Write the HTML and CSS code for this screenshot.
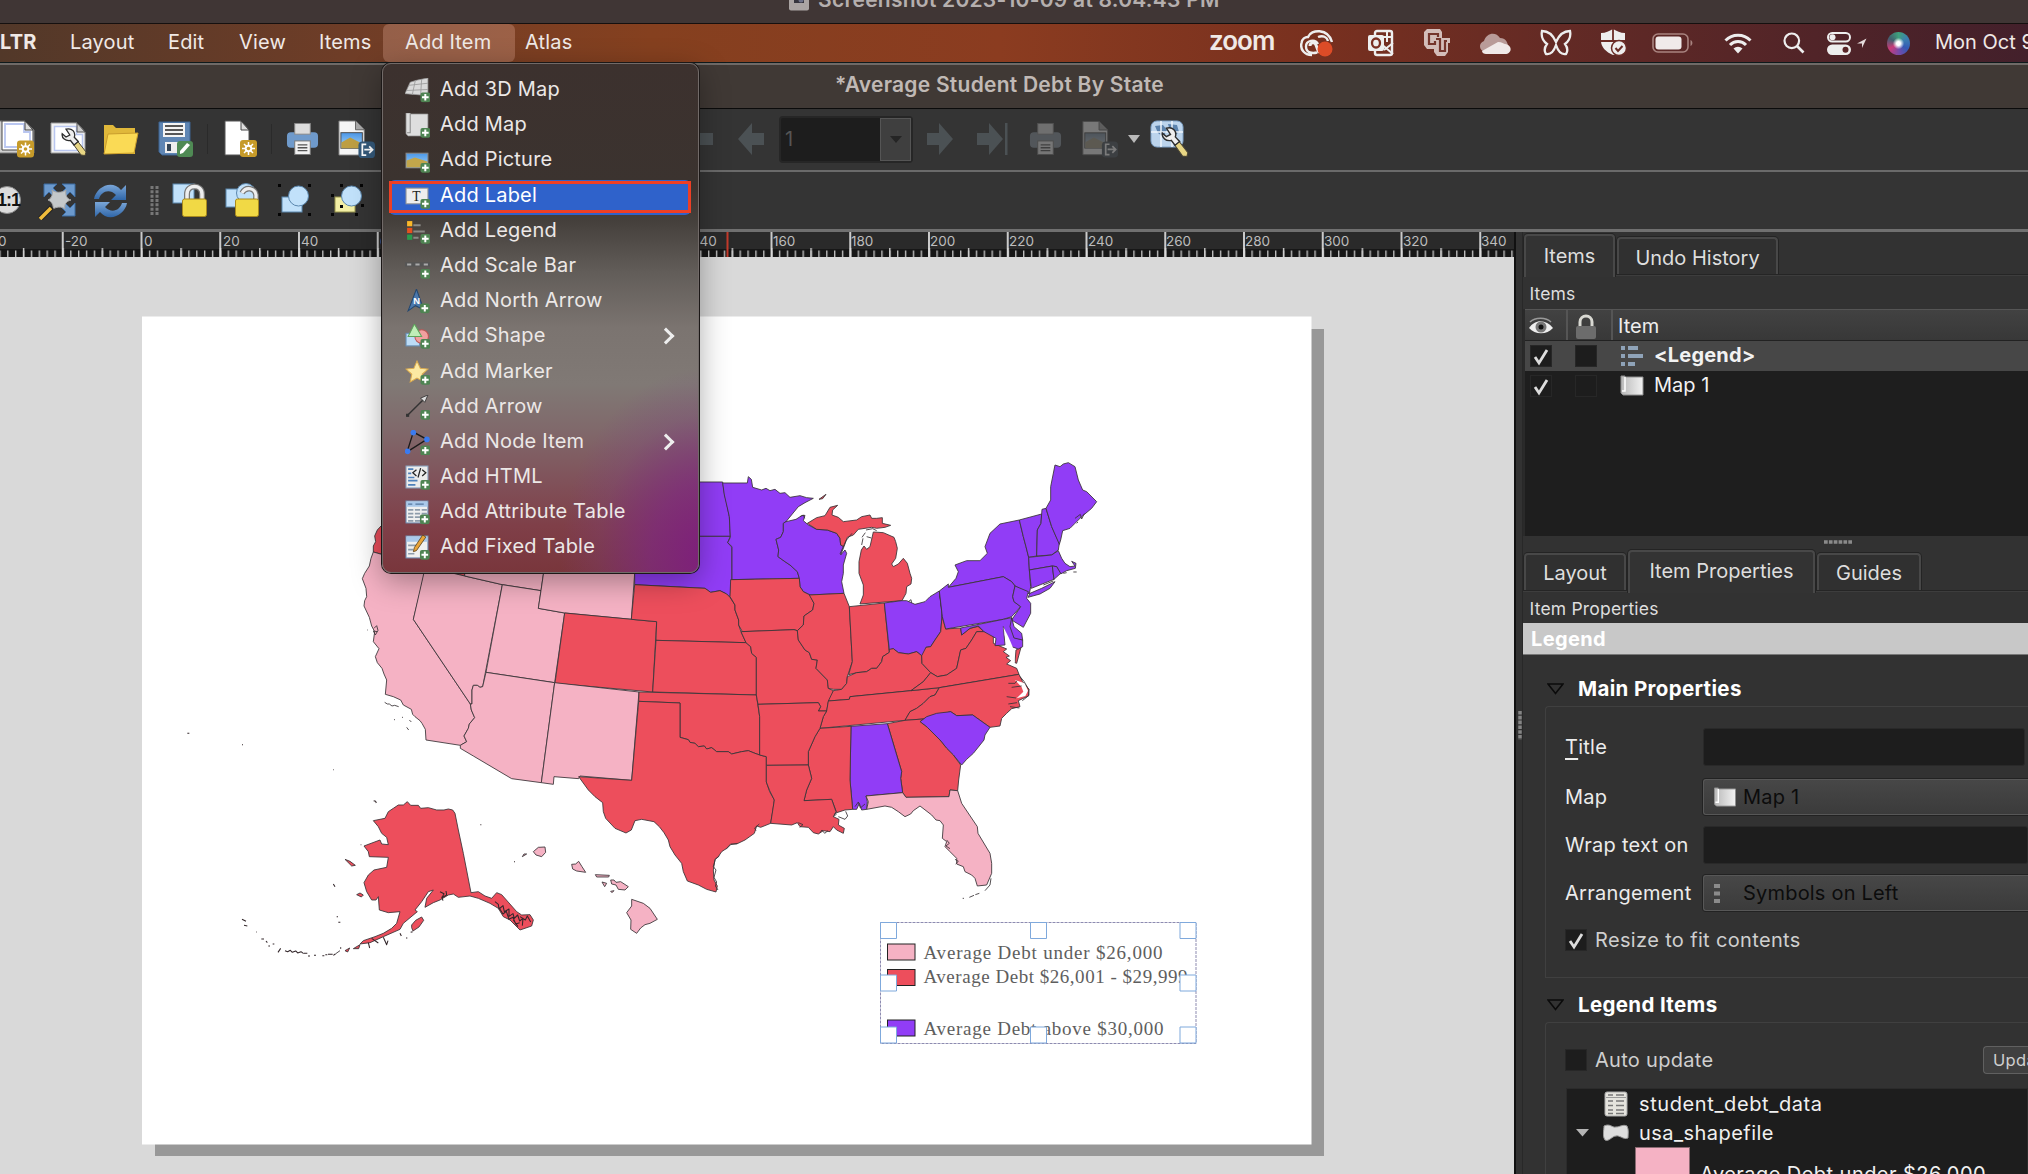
FILE: index.html
```html
<!DOCTYPE html>
<html lang="en">
<head>
<meta charset="utf-8">
<title>Average Student Debt By State</title>
<link rel="stylesheet" href="styles.css">
</head>
<body>
<svg width="0" height="0" class="defs">
  <defs>
    <linearGradient id="paper" x1="0" x2="1"><stop offset="0" stop-color="#b9b9b9"/><stop offset="1" stop-color="#f2f2f2"/></linearGradient>
    <linearGradient id="sky" x1="0" y1="0" x2="0" y2="1"><stop offset="0" stop-color="#4a97e8"/><stop offset="1" stop-color="#a9d6f7"/></linearGradient>
    <linearGradient id="blue" x1="0" y1="0" x2="0" y2="1"><stop offset="0" stop-color="#7aa6d8"/><stop offset="1" stop-color="#2f66a8"/></linearGradient>
    <symbol id="plus" viewBox="0 0 10 10"><rect x=".3" y=".3" width="9.4" height="9.4" rx="2" fill="#4e8452"/><path d="M5 1.8v6.4M1.8 5h6.4" stroke="#fff" stroke-width="1.9"/></symbol>
    <symbol id="star" viewBox="0 0 18 18"><rect x=".5" y=".5" width="17" height="17" rx="3" fill="#c69b2a"/><path d="M9 2.500v13M2.500 9h13M4.500 4.500l9 9M13.500 4.500l-9 9" stroke="#fff" stroke-width="1.500"/><circle cx="9" cy="9" r="3.800" fill="#fff"/><circle cx="9" cy="9" r="1.800" fill="#c69b2a"/></symbol>
    <symbol id="wrench" viewBox="0 0 26 28"><path d="M12.500 16.500l4-3.500 8.500 11-1 3.500-4-.5z" fill="#e8d684" stroke="#4b4636" stroke-width="1"/><path d="M5 1.200C11-.5 15 4 13.300 9.300l4 4.200-4.300 3.500-3.500-4.500C4.500 13.500.5 10 1.200 5.800L5 9l3.800-2z" fill="#eee" stroke="#2d2d2d" stroke-width="1.300"/></symbol>
    <symbol id="printer" viewBox="0 0 34 34"><rect x="1" y="10" width="32" height="16" rx="4" fill="#6f9acb"/><rect x="9" y="1" width="16" height="11" fill="#dcdcdc" stroke="#888"/><rect x="9" y="19" width="16" height="14" fill="#f2f2f2" stroke="#777"/><path d="M12 23h10M12 26h10M12 29h10" stroke="#555" stroke-width="1.4"/></symbol>
    <symbol id="export" viewBox="0 0 40 40"><path d="M2 1h17l9 9v26H2z" fill="#f6f6f6" stroke="#777"/><path d="M19 1v9h9" fill="#aaa" stroke="#666"/><rect x="4" y="13" width="22" height="16" fill="url(#sky)" stroke="#4d4d4d"/><path d="M4.500 23l9-5 12 6v5h-21z" fill="#bd9e42"/><rect x="22" y="22" width="17" height="17" rx="4" fill="#34597a"/><path d="M30 25h-4v11h4M28 30.500h8M33 27l3.500 3.500L33 34" fill="none" stroke="#fff" stroke-width="1.8"/></symbol>
    <symbol id="map" viewBox="0 0 24 22"><path d="M1 1h4v1h18v18H3L1 18z" fill="url(#paper)" stroke="#8f8f8f"/><path d="M5 2v14H2" fill="none" stroke="#fff" stroke-width="1.500"/></symbol>
    <symbol id="arrow" viewBox="0 0 26 32"><path d="M0 10h12V0l14 16-14 16V22H0z" fill="#4b5154"/></symbol>
    <symbol id="check" viewBox="0 0 22 22"><path d="M5 12l4 6 8-13" fill="none" stroke="#ddd" stroke-width="2.800"/></symbol>
  </defs>
</svg>

<header class="preview-title">
  <svg width="20" height="14" viewBox="0 0 20 14"><rect width="20" height="13.500" rx="2" fill="#aaa4a3"/><rect x="5" y="0" width="10" height="6" fill="#35343d"/><circle cx="12" cy="3" r="2.500" fill="#6d7088"/></svg>
  <span>Screenshot 2023-10-09 at 8.04.43 PM</span>
</header>

<nav class="menubar">
  <div class="menus">
    <b class="m-app">LTR</b><span class="m-layout">Layout</span><span class="m-edit">Edit</span><span class="m-view">View</span><span class="m-items">Items</span><span class="m-add">Add Item</span><span class="m-atlas">Atlas</span>
  </div>
  <div class="tray">
    <span class="zoom-word">zoom</span>
    <svg class="t-cc" width="34" height="28" viewBox="0 0 34 28"><path d="M12 26C4 26 0 20 1.500 14 2 10 5 8 8 8c3-8 20-9 24 5M17 23.500c-4 1-11 1-11-6 0-6 9-8 12-2.500M18 8c5-2 9 0 10 4" fill="none" stroke="#eee" stroke-width="2.400"/><path d="M10 17c0-4 5-4 6-1l3 8" fill="none" stroke="#eee" stroke-width="3"/><circle cx="25" cy="20" r="7.500" fill="#dd4c27"/></svg>
    <svg class="t-ol" width="28" height="28" viewBox="0 0 28 28"><rect x="8" y="2" width="17" height="24" rx="2" fill="none" stroke="#eee" stroke-width="2.400"/><path d="M9 8h15M20 3v10M13 14l13 11M26 14l-9 7" stroke="#eee" stroke-width="2"/><rect x="1" y="6" width="16" height="16" rx="2" fill="#eee"/><ellipse cx="9" cy="14" rx="4" ry="4.500" fill="none" stroke="#7a2f22" stroke-width="2.300"/></svg>
    <svg class="t-cu" width="28" height="28" viewBox="0 0 28 28"><path d="M1 3l3-3h13l2 3v6h8v5h-2v9l-3 4h-8l-3-4v-3H4l-3-4z" fill="#d3bdb9"/><path d="M15 8V5H6v10h6v-3M13 10h4v12h5V12h2" fill="none" stroke="#74352c" stroke-width="2.200"/></svg>
    <svg class="t-cloud" width="34" height="22" viewBox="0 0 34 22"><path d="M7 20C1 19 0 11 6 9 8 1 18-1 22 6c6 0 7 4 8 7z" fill="#b99b98"/><path d="M4 19l16-9c4 0 6 2 7 2 8 1 7 10 0 10H8c-2 0-4-1-4-3z" fill="#f0e9e8"/></svg>
    <svg class="t-fly" width="32" height="28" viewBox="0 0 32 28"><path d="M2 2c6 0 11 4 14 11C19 6 24 2 30 2c1 5-1 10-5 13 3 4 3 7 1 10-5 1-8-3-10-9-2 6-5 10-10 9-2-3-2-6 1-10C3 12 1 7 2 2z" fill="none" stroke="#eee" stroke-width="2.300"/></svg>
    <svg class="t-shield" width="28" height="28" viewBox="0 0 28 28"><path d="M1 4c5 0 8-2 12-4 4 2 7 4 12 4v8c0 8-6 12-12 14C6 23 1 18 1 12z" fill="#eee"/><path d="M13 0v13M1 12h24" stroke="#6a2c26" stroke-width="1.800"/><circle cx="19" cy="19" r="7.500" fill="#eee" stroke="#6a2c26" stroke-width="1.500"/><path d="M15.500 19l2.500 3 4.500-5" fill="none" stroke="#6a2c26" stroke-width="2"/></svg>
    <svg class="t-bat" width="42" height="20" viewBox="0 0 42 20"><rect x="1" y="1" width="35" height="18" rx="5" fill="none" stroke="#a98480" stroke-width="1.600"/><rect x="3.500" y="3.500" width="26" height="13" rx="3" fill="#f0eaea"/><path d="M38.500 7v6c2.500-1 2.500-5 0-6z" fill="#a98480"/></svg>
    <svg class="t-wifi" width="28" height="21" viewBox="0 0 28 21"><path d="M1.500 7.500a17.500 17.500 0 0 1 25 0M6 12a11 11 0 0 1 16 0" fill="none" stroke="#eee" stroke-width="3"/><path d="M9.500 15.500a6.500 6.500 0 0 1 9 0L14 20.500z" fill="#eee"/></svg>
    <svg class="t-find" width="22" height="22" viewBox="0 0 22 22"><circle cx="8.800" cy="8.800" r="7.300" fill="none" stroke="#eee" stroke-width="2.200"/><path d="M14 14l6.500 6.500" stroke="#eee" stroke-width="2.600"/></svg>
    <svg class="t-cc2" width="24" height="23" viewBox="0 0 24 23"><rect x="1" y="1" width="22" height="8.500" rx="4.200" fill="none" stroke="#eee" stroke-width="2"/><circle cx="5.500" cy="5.200" r="3" fill="#eee"/><rect y="12.500" width="24" height="10.500" rx="5.200" fill="#eee"/><circle cx="18.500" cy="17.700" r="3" fill="#5a2527"/></svg>
    <svg class="t-loc" width="10" height="10" viewBox="0 0 10 10"><path d="M0 5.500L9.500.5 5 10V5.500z" fill="#e5dcdc"/></svg>
    <span class="siri"></span>
    <span class="clock">Mon Oct 9</span>
  </div>
</nav>

<div class="window-title">*Average Student Debt By State</div>

<div class="toolbar">
  <svg class="i-new" width="35" height="38" viewBox="0 0 35 38"><path d="M-6 1h31l9 9v23H-6z" fill="#cfcfcf" stroke="#777"/><path d="M2 1h23l8 9v20H2z" fill="#fff" stroke="#444"/><path d="M5 4h19v8h6v15H5z" fill="none" stroke="#b9c6f0" stroke-width="1.800"/><path d="M25 1v9h8z" fill="#ddd" stroke="#444"/><use href="#star" x="16.500" y="20" width="18" height="18"/></svg>
  <svg class="i-man" width="37" height="36" viewBox="0 0 37 36"><path d="M1 2h26l8 9v21H1z" fill="#f2f2f2" stroke="#999"/><path d="M4.500 5.500h22v8h6v16h-28z" fill="#fff" stroke="#b9c6f0" stroke-width="1.500"/><path d="M27 2v9h8z" fill="#ccc" stroke="#555"/><use href="#wrench" x="11" y="7" width="26" height="28"/></svg>
  <svg class="i-open" width="36" height="31" viewBox="0 0 36 31"><path d="M1 30V1h9l3 3h19v26z" fill="#e0b83a"/><path d="M1 30L5 10l30-1-4 20z" fill="#fada55" stroke="#c99d2c"/></svg>
  <svg class="i-save" width="36" height="37" viewBox="0 0 36 37"><path d="M1 1h31v33H4l-3-3z" fill="#5f86b4" stroke="#3c6290"/><rect x="5" y="2" width="22" height="14" fill="#f4f4f4"/><path d="M7 5h18M7 9h18M7 13h18" stroke="#222" stroke-width="1.600"/><rect x="7" y="21" width="17" height="11" fill="#eee"/><rect x="9" y="23" width="4" height="7" fill="#345"/><rect x="19" y="20" width="16" height="16" rx="3" fill="#4f8a54"/><path d="M22 33v-3l7-8 3 2-7 8z" fill="#fff"/></svg>
  <i class="sep s1"></i>
  <svg class="i-page" width="34" height="38" viewBox="0 0 34 38"><path d="M1 1h16l8 9v25H1z" fill="#fff" stroke="#555"/><path d="M17 1v9h8z" fill="#ddd" stroke="#444"/><use href="#star" x="15.500" y="19.500" width="18" height="18"/></svg>
  <i class="sep s2"></i>
  <svg class="i-print" width="33" height="34"><use href="#printer" width="33" height="34"/></svg>
  <svg class="i-exp" width="39" height="39"><use href="#export" width="39" height="39"/></svg>
  <svg class="i-first" width="32" height="32" viewBox="0 0 32 32"><path d="M0 0h3v32H0z" fill="#4b5154"/><path d="M32 10H19V0L5 16l14 16V22h13z" fill="#4b5154"/></svg>
  <svg class="i-prev" width="26" height="32"><g transform="translate(26 0) scale(-1 1)"><use href="#arrow" width="26" height="32"/></g></svg>
  <div class="spin"><span>1</span><i></i></div>
  <svg class="i-next" width="26" height="32"><use href="#arrow" width="26" height="32"/></svg>
  <svg class="i-last" width="31" height="32" viewBox="0 0 31 32"><path d="M28 0h2.500v32H28z" fill="#4b5154"/><path d="M0 10h12V0l14 16-14 16V22H0z" fill="#4b5154"/></svg>
  <svg class="i-print2 dim" width="33" height="34"><use href="#printer" width="33" height="34"/></svg>
  <svg class="i-exp2 dim" width="38" height="39"><use href="#export" width="38" height="39"/></svg>
  <i class="caret"></i>
  <svg class="i-atlas" width="40" height="38" viewBox="0 0 40 38"><rect x="1" y="1" width="32" height="26" rx="6" fill="#bcd4ec" stroke="#7ea2c8"/><path d="M5 6l8-1 4 5-4 7-5-4zM18 4l9 1 2 7-7 6z" fill="#5c83ad"/><path d="M11 1v26M22 1v26M1 12h32" stroke="#eef5fb" stroke-width="1.500"/><use href="#wrench" x="11" y="6" width="28" height="32"/></svg>
</div>

<div class="toolbar second">
  <svg class="j-one" width="22" height="30" viewBox="0 0 22 30"><circle cx="7" cy="14" r="13.500" fill="#dcdcdc" stroke="#8a8a8a"/><text x="-3" y="20" class="one">1:1</text></svg>
  <svg class="j-full" width="40" height="38" viewBox="0 0 40 38"><path d="M6 2h13l-4 4 6 6-4 4-6-6-5 5zM37 2v13l-5-5-6 6-4-4 6-6-4-4zM37 34H24l4-4-6-6 4-4 6 6 5-5z" fill="#6b99cd" stroke="#3b6aa0"/><path d="M14 8c3 3 10 3 14 0-1 5 1 9 5 10-5 1-7 5-6 9-4-3-9-2-12 0 1-4-2-8-5-9 4-2 5-6 4-10z" fill="#c4c8ca" stroke="#a5a5a5"/><path d="M14 25L2 37" stroke="#222" stroke-width="5.500"/><path d="M13 26L2 37" stroke="#f1bd3c" stroke-width="3.500"/></svg>
  <svg class="j-ref" width="35" height="36" viewBox="0 0 35 36"><path d="M1 16C3 4 19-4 28 7l5-5v15H18l5-5c-7-7-15-3-17 4z" fill="url(#blue)"/><path d="M34 20C32 32 16 40 7 29l-5 5V19h15l-5 5c7 7 15 3 17-4z" fill="url(#blue)"/></svg>
  <svg class="j-grip" width="9" height="29" viewBox="0 0 9 29"><path d="M2 0v29M7 0v29" stroke="#787878" stroke-width="3" stroke-dasharray="3 1.330"/></svg>
  <svg class="j-lock" width="36" height="35" viewBox="0 0 36 35"><rect x="1" y="1" width="21" height="19" fill="#c1e1fa" stroke="#5b87ae"/><path d="M15 18V11c0-10 15-10 15 0v7" fill="none" stroke="#777" stroke-width="6"/><path d="M15 18V11c0-10 15-10 15 0v7" fill="none" stroke="#eee" stroke-width="3.500"/><rect x="10.500" y="16" width="24" height="17.500" rx="2" fill="#f1d945" stroke="#a98a1d"/></svg>
  <svg class="j-unlock" width="36" height="35" viewBox="0 0 36 35"><rect x="1" y="6" width="20" height="18" fill="#c1e1fa" stroke="#5b87ae"/><circle cx="21" cy="10" r="9.500" fill="#c1e1fa" stroke="#5b87ae"/><path d="M17 10c4-7 13-5 14 2v6" fill="none" stroke="#777" stroke-width="5.500"/><path d="M17 10c4-7 13-5 14 2v6" fill="none" stroke="#eee" stroke-width="3.200"/><rect x="10.500" y="16" width="23" height="17.500" rx="2" fill="#f1d945" stroke="#a98a1d"/></svg>
  <svg class="j-grp" width="33" height="33" viewBox="0 0 33 33"><rect x="4" y="13" width="20" height="15" fill="#c1e1fa" stroke="#5b87ae"/><circle cx="20.500" cy="12" r="10" fill="#c1e1fa" stroke="#5b87ae"/><path d="M0 0h3v3H0zM30 0h3v3h-3zM0 29h3v3H0zM30 29h3v3h-3z" fill="#050505"/></svg>
  <svg class="j-ugrp" width="33" height="33" viewBox="0 0 33 33"><rect x="4" y="13" width="20" height="15" fill="#f3efa5" stroke="#97944c"/><circle cx="20.500" cy="12" r="10" fill="#c1e1fa" stroke="#5b87ae"/><path d="M9 0h3v3H9zM29 0h3v3h-3zM0 10h3v3H0zM30 20h3v3h-3zM0 29h3v3H0zM24 29h3v3h-3zM9 21h3v3H9z" fill="#050505"/></svg>
</div>

<main class="work">
  <section class="stage">
    <svg class="ruler" width="1514" height="25" viewBox="0 0 1514 25">
      <defs>
        <pattern id="minor" x="141" y="0" width="7.875" height="25" patternUnits="userSpaceOnUse"><path d="M.7 18.500V25" stroke="#bdbdbd" stroke-width="1.400"/></pattern>
        <pattern id="mid" x="141" y="0" width="39.375" height="25" patternUnits="userSpaceOnUse"><path d="M.7 16V25" stroke="#cfcfcf" stroke-width="1.400"/></pattern>
        <pattern id="major" x="140.500" y="0" width="78.750" height="25" patternUnits="userSpaceOnUse"><path d="M1 0V25" stroke="#dcdcdc" stroke-width="1.800"/></pattern>
      </defs>
      <rect width="1514" height="25" fill="#2a2a2a"/><rect y="17" width="1514" height="8" fill="#171717"/>
      <rect width="1514" height="25" fill="url(#minor)"/><rect width="1514" height="25" fill="url(#mid)"/><rect width="1514" height="25" fill="url(#major)"/>
      <g class="nums"><text x="-17">-40</text><text x="65">-20</text><text x="144">0</text><text x="223">20</text><text x="301">40</text><text x="380">60</text><text x="694">140</text><text x="773">160</text><text x="851">180</text><text x="930">200</text><text x="1009">220</text><text x="1088">240</text><text x="1166">260</text><text x="1245">280</text><text x="1324">300</text><text x="1403">320</text><text x="1481">340</text></g>
      <path d="M727.500 0v25" stroke="#c43a2b" stroke-width="2"/>
    </svg>
    <svg class="canvas" width="1514" height="917" viewBox="0 257 1514 917">
      <rect x="155" y="329" width="1169" height="827" fill="#989898"/>
      <rect x="142" y="316.500" width="1169.500" height="828" fill="#fff"/>
      <g class="states" transform="translate(340 450) scale(.33333)">
        <path class="r" d="M125 226L112 240 104 258 107 275 100 288V306L335 370 374 378V226z"/>
        <path class="p" d="M100 306L256 350 254 370 220 508 391 762 394 780 404 803 388 822 385 835 372 858 380 875 361 886 258 870 256 838 246 820 240 812 225 800 218 793 214 778 190 765 182 750 160 740 136 733 140 690 132 672 126 655 112 638 106 620 117 596 100 575 104 545 95 528 88 502 72 468 74 452 80 440 78 415 67 386 74 370 88 348 93 325z"/>
        <path class="p" d="M256 350L374 378 487 404 428 710 420 712 412 706 400 706 396 720 396 762 391 762 220 508z"/>
        <path class="p" d="M374 340V378L487 404 603 422 611 367V340z"/>
        <path class="p" d="M487 404L603 422 595 475 674 489 644 698 438 667z"/>
        <path class="p" d="M611 340V367L603 422 595 475 674 489 874 508 884 370V340z"/>
        <path class="r" d="M674 489L950 515 938 726 645 700z"/>
        <path class="p" d="M438 667L644 698 604 998 515 986 400 918 361 895 361 886 380 875 372 858 385 835 388 822 404 803 394 780 391 762 396 762 396 720 400 706 412 706 420 712 428 710z"/>
        <path class="p" d="M644 698L897 726 875 991 720 978 716 986 642 980 640 1003 604 998z"/>
        <path class="v" d="M1000 96H1148L1153 130 1160 160 1168 200 1171 259H1000z"/>
        <path class="v" d="M884 259H1171L1163 278 1176 292V390L1173 415 1170 442 1160 432 1140 422 1112 427 1095 415 884 404z"/>
        <path class="r" d="M1176 388L1172 442 1187 470 1187 480 1198 515 1210 545 1240 540 1240 388z"/>
        <path class="r" d="M884 404L1095 415 1112 427 1140 422 1160 432 1170 442 1185 465 1185 480 1196 510 1196 525 1203 545 1218 578 948 571 950 515 874 508z"/>
        <path class="r" d="M948 571L1218 578 1232 590 1235 610 1249 622V735L938 726z"/>
        <path class="r" d="M897 726L1249 735 1259 800V915L1245 910 1225 902 1205 905 1175 912 1165 905 1130 905 1115 893 1100 897 1093 888 1075 890 1065 880 1050 877 1045 869 1020 862V759L896 754z"/>
        <path class="r" d="M896 754L1020 759V862L1045 869 1050 877 1065 880 1075 890 1093 888 1100 897 1115 893 1130 905 1165 905 1175 912 1205 905 1225 902 1245 910 1259 915 1279 920V996L1289 1025 1303 1050 1298 1085 1292 1120 1262 1132 1250 1128 1243 1150 1215 1170 1190 1182 1172 1182 1160 1195 1145 1205 1135 1220 1125 1228 1120 1260 1122 1290 1132 1308 1128 1326 1100 1318 1075 1305 1042 1293 1030 1265 1025 1240 1005 1215 990 1190 985 1170 972 1148 958 1130 942 1115 905 1108 885 1112 874 1140 858 1149 825 1135 797 1105 790 1085 788 1058 765 1040 745 1020 716 980 875 991z"/>
        <path class="s" d="M134 757l8 5 6 0 8 6 8-2 12 4M162 808l3 2M186 802h3M208 810l6 6M200 832l6 8M82 540h2M102 535l8-8 4 14-8 14-6-12 12 2M1258 1122l-14 12 4 8M1192 1180l-20 4-14 14M1138 1218l-12 10-6 22 8 10-6 22 8 14-4 12 8 12"/>
      </g>
      <g class="states" transform="translate(690 450) scale(.33333)">
        <path class="v" d="M98 99H172L175 80 184 88 188 112 215 120 228 115 240 122 255 118 270 130 285 128 300 142 330 137 350 143 370 145 345 158 325 170 288 215 280 220V245L272 262 258 268 266 300 264 320 285 335 300 345 322 365 328 385 126 389V290L113 278 121 262 118 200 110 165 103 135z"/>
        <path class="v" d="M288 215L318 208 335 197 345 196 340 212 355 225 380 238 412 240 440 250 450 265 452 285 462 290 452 315 465 300 470 310 460 345 460 370 455 395 462 430 360 435 340 425 330 410 328 385 322 365 300 345 285 335 264 320 266 300 258 268 272 262 280 245V220z"/>
        <path class="r" d="M352 220L380 203 405 197 420 172 443 166 428 180 426 195 445 202 460 215 500 210 515 200 540 195 545 205 560 205 577 203 577 220 602 226 585 232 560 235 545 232 505 238 490 255 472 262 462 290 452 285 450 265 440 250 412 240 380 238z"/>
        <path class="r" d="M387 148L408 133 398 146z"/>
        <path class="r" d="M550 246L580 248 612 262 617 275 622 295 617 325 605 342 610 350 625 342 640 325 652 340 660 370 665 385 663 402 650 410 648 430 636 452 510 462 520 435V405L507 370V335L514 300 522 288 530 298 540 290z"/>
        <path class="s" d="M450 312l8-18 10-22 18-22M515 285l4-20M530 260l14 4M528 240l20-4 12 6M330 200l10-5 4 10M516 262l10-14M655 455l8-6 2 10"/>
        <path class="r" d="M122 389L328 385 330 410 340 425 360 435 372 460 368 480 342 498 340 525 322 542 312 539 157 545 146 525 146 510 135 480 135 465 120 440z"/>
        <path class="r" d="M153 545L312 539 322 542 325 570 345 600 358 608 365 628 382 630 378 655 412 690 415 715 430 722 428 745 415 755 410 783 385 783 392 770 385 758 204 763 199 735V622L185 610 182 590 168 578z"/>
        <path class="r" d="M358 435L462 430 478 470 487 635 472 680 470 700 455 718 430 718 415 715 412 690 378 655 382 630 365 628 358 608 345 600 325 570 322 542 340 525 342 498 368 480 372 460z"/>
        <path class="r" d="M478 470L583 459 598 607 578 620 575 635 560 655 545 655 530 665 500 668 476 674 487 635z"/>
        <path class="v" d="M583 459L635 452 650 452 675 463 705 455 720 440 748 423 757 490 752 545 735 570 722 590 708 592 705 612 695 617 680 605 655 612 640 610 625 608 610 596 598 600z"/>
        <path class="r" d="M430 722L455 718 470 700 472 680 500 668 530 665 545 655 560 655 575 635 578 620 598 607 598 598 610 596 625 608 655 612 680 605 695 617 696 640 722 668 700 695 663 722 480 740 478 748 415 753z"/>
        <path class="r" d="M415 753L478 748 480 740 663 722 748 713 735 735 720 740 700 760 680 775 660 785 645 811 390 835 400 800 410 783z"/>
        <path class="r" d="M748 423L757 500 767 537 812 534 815 555 840 535 870 528 882 545 860 545 845 570 828 595 812 600 800 655 770 675 742 680 722 668 696 640 695 617 708 592 722 590 735 570 752 545 757 490z"/>
        <path class="r" d="M663 722L700 695 722 668 742 680 770 675 800 655 812 600 828 595 845 570 860 545 882 545 865 530 910 555 910 580 950 597 940 605 958 618 948 622 962 632 950 642 980 655 987 673 748 713z"/>
        <path class="r" d="M978 600L993 592 980 640 975 638z"/>
        <path class="r" d="M748 713L987 673 998 695 1017 718 1015 738 985 752 990 770 965 776 950 790 935 805 930 828 900 832 848 795 800 797 782 785 700 807 645 811 660 785 680 775 700 760 720 740 735 735z"/>
        <path class="w" d="M975 690L1004 700 1014 722 1006 738 980 745 1000 725 995 712z"/>
        <path class="s" d="M955 700h20l6-8M965 712l30-4M950 740l28 4M955 762l26-4M960 770l28 4M990 680l12 14 14 24 1 18-20 16"/>
        <path class="v" d="M690 815L710 800 740 790 782 785 800 797 848 795 900 832 885 855 882 870 850 910 830 928 815 945 790 915 770 895 750 870 712 832z"/>
        <path class="r" d="M592 821L645 811 700 807 690 815 712 832 750 870 770 895 790 915 812 945 806 990 803 1022 780 1020 777 1040 648 1042 638 1028 632 985 635 965z"/>
        <path class="v" d="M483 829L592 821 635 965 632 985 638 1028 528 1038 532 1055 530 1078 515 1080 508 1060 500 1078 488 1078 480 990z"/>
        <path class="r" d="M390 835L483 829 480 990 488 1078 465 1080 440 1088 425 1048 342 1052 350 1020 365 985 355 945 355 905 375 860z"/>
        <path class="r" d="M204 763L385 758 392 770 385 783 410 783 400 800 390 835 375 860 355 905 355 945 229 946V920L209 915V800z"/>
        <path class="r" d="M229 946L355 945 365 985 350 1020 342 1052 425 1048 438 1085 430 1100 447 1108 445 1125 463 1135 460 1150 440 1140 430 1130 420 1145 400 1142 385 1152 370 1148 355 1132 330 1130 322 1118 305 1125 242 1120 253 1050 239 1022 229 996z"/>
        <path class="s" d="M430 1100l10-8M445 1100l20 8 8-10-6-14M440 1088l-8 6M325 1118l14 6-10 8M390 1148l6-8 8 10 10-8M495 1070l10-14 6 18 14-12"/>
        <path class="p" d="M528 1038L638 1028 648 1042 777 1040 780 1020 803 1022 815 1060 862 1130 864 1150 900 1210 905 1240V1270L890 1305 862 1308 855 1285 845 1275 825 1265 820 1250 800 1242 800 1225 780 1205 765 1190 770 1175 757 1165 760 1125 750 1112 738 1110 725 1095 690 1068 670 1082 662 1092 645 1100 625 1085 605 1072 585 1068 530 1078 535 1055z"/>
        <path class="s" d="M903 1285L900 1305 885 1322M868 1330l-12 4M852 1336l-14 6M818 1345h4M770 1170l8 10-10 8 12 8M795 1228l10 6-8 8"/>
        <path class="v" d="M775 412L798 385 805 365 795 345 830 332 870 332 892 310 885 290 900 250 930 222 988 210 1000 260 1008 290 1016 322 1018 360 1022 410 1018 432 975 408 965 395 940 380z"/>
        <path class="v" d="M1014 442L1020 430 1055 415 1095 395 1080 415 1050 432z"/>
        <path class="v" d="M748 423L775 402 775 412 940 380 965 395 975 408 968 440 972 455 992 470 965 500 940 508 767 537 757 500z"/>
        <path class="v" d="M975 408L1015 425 1010 445 1022 460V490L1000 532 965 510 992 470 972 455 968 440z"/>
        <path class="v" d="M812 534L940 508 965 503 972 562 998 570 998 590 985 597 965 590 950 565 940 530 945 585 915 587 918 565 882 545 865 528 840 535 815 555z"/>
        <path class="v" d="M965 503L972 530 995 550 998 570 972 564 960 530z"/>
        <path class="w" d="M940 530L955 560 968 590 975 640 965 625 950 590z"/>
        <path class="v" d="M988 210L1055 192 1053 220 1042 240 1040 318 1016 322 1008 290 1000 260z"/>
        <path class="v" d="M1055 192L1056 178 1068 175 1085 230 1108 280 1105 300 1085 315 1040 318 1042 240 1053 220z"/>
        <path class="v" d="M1068 175L1082 150V110L1095 45 1110 50 1120 42 1135 38 1155 50 1165 90 1178 120 1190 125 1220 155 1205 175 1175 200 1155 220 1140 235 1118 242 1112 270 1108 283 1085 230z"/>
        <path class="v" d="M1016 322L1085 315 1105 302 1115 325 1125 340 1140 350 1155 348 1145 334 1158 340 1156 355 1130 362 1112 372 1100 350 1087 348 1018 360z"/>
        <path class="v" d="M1018 360L1087 348 1092 388 1024 415z"/>
        <path class="v" d="M1087 348L1100 350 1112 370 1092 388z"/>
        <path class="s" d="M1155 205l16-12 4 14 8-16M1160 220l4-4M1120 370l10-2M1150 366h10M1060 405l30-12"/>
      </g>
      <g class="states" transform="translate(170 720) scale(.33333)">
        <path class="r" d="M610 302L645 295 655 275 670 265 685 255 700 255 712 245 722 256 745 256 752 265 775 263 800 270 822 270 835 267 848 270 855 280 865 330 880 400 903 518 925 515 945 528 965 535 980 518 995 524 1040 575 1055 585 1080 584 1090 600 1085 618 1050 630 1020 600 1000 590 985 565 960 550 925 535 900 528 865 532 850 522 835 525 810 540 790 548 765 562 770 535 790 510 775 515 755 545 735 570 742 575 700 610 690 628 640 650 600 668 570 672 580 662 615 650 640 640 665 625 680 610 690 575 655 578 628 570 625 530 618 540 605 540 590 515 582 488 595 465 612 450 650 442 655 412 598 410 595 395 582 378 630 360 635 372 655 374 650 352 635 340 625 320z"/>
        <path class="r" d="M525 418L540 424 556 436 545 438zM560 524l10-5 10 6-6 6zM725 615l12-14 18-10 6 10-14 20-18 12-4-10zM496 702l14-10M525 692l14-8-6 12zM550 686l20-12-4 12z"/>
        <path class="d" d="M975 545l10 8 2 14 12-10 4 18 14-8 0 22 12-8 4 14 10-10 6 18 10-8-2 22M985 560l14 22 10-8 8 24 12-6 8 20 12-4M1050 590l16 10 6-12 10 18M1030 600l14 20M810 515l12 6-6 12 14-8-2-12M815 530l4 12M640 652l10 22 4-12M595 668l4 16M605 655l20 14M690 640l4 8M708 654h4M728 635l-6 2"/>
        <path class="d" d="M52 40h6M216 74h3M489 149h2M611 242l6 2 2 5M931 314h3M1032 425h3M572 374h2M490 492l5 8M500 590h4M505 607h6M216 598l12 6M222 616l10 2M259 636h2M274 657h8M288 663l4 5M295 678h5M308 672h5M324 697l8-12M345 692l8 3 8-4 6 6 10-4 6 6 10-4 8 6M402 700h10M414 708h6M432 706h6M457 707h6M466 704h6M474 703h14M490 706l6-4M512 682v4"/>
        <path class="p" d="M1090 395L1105 382 1125 381 1127 397 1115 410 1098 405zM1205 433L1217 432 1226 424 1236 440 1247 457 1220 453 1208 447zM1276 464L1318 466 1316 471 1280 471zM1296 486L1310 490 1304 500zM1322 480L1332 480 1338 487 1352 485 1375 500 1365 510 1345 508 1338 495 1325 492zM1322 514L1332 512 1326 518zM1385 538L1420 550 1440 565 1462 598 1440 610 1425 614 1412 624 1400 640 1382 628 1383 600 1370 578 1385 558zM1057 410L1062 402 1070 402z"/>
      </g>
      <g class="legend">
        <rect x="880.500" y="922.500" width="315.500" height="121" fill="#fff" stroke="#8d8bb0" stroke-dasharray="3 1"/>
        <rect x="887.500" y="944" width="27.500" height="16" fill="#f5b2c4" stroke="#222"/>
        <rect x="887.500" y="969.500" width="27.500" height="16" fill="#ed4e5c" stroke="#222"/>
        <rect x="887.500" y="1020" width="27.500" height="16" fill="#913df6" stroke="#222"/>
        <text x="923.500" y="959" textLength="239">Average Debt under $26,000</text>
        <text x="923.500" y="983" textLength="264">Average Debt $26,001 - $29,999</text>
        <text x="923.500" y="1035" textLength="240">Average Debt above $30,000</text>
        <path class="handles" d="M880.500 922.500h16v16h-16zM1030.500 922.500h16v16h-16zM1180 922.500h16v16h-16zM880.500 975h16v16h-16zM1180 975h16v16h-16zM880.500 1027h16v16h-16zM1030.500 1027h16v16h-16zM1180 1027h16v16h-16z"/>
      </g>
    </svg>
  </section>

  <aside class="dock">
    <div class="gripcol"><svg width="6" height="30" viewBox="0 0 6 30"><path d="M3 1v29" stroke="#858585" stroke-width="3.500" stroke-dasharray="3.600 1.200"/></svg></div>
    <div class="panels">
      <div class="tabs"><div class="tab on t1">Items</div><div class="tab t2">Undo History</div></div>
      <div class="caption cap1">Items</div>
      <div class="tree">
        <div class="thead">
          <div class="th c1"><svg width="25" height="20" viewBox="0 0 25 20"><path d="M0 12c6-9 17-9 24 0-6 7-18 7-24 0z" fill="#eee"/><circle cx="12" cy="11" r="5.500" fill="#777"/><circle cx="12" cy="11" r="2.500" fill="#111"/><path d="M1 6c5-5 16-5 21 0" fill="none" stroke="#999" stroke-width="1.500"/></svg></div>
          <div class="th c2"><svg width="20" height="25" viewBox="0 0 20 25"><path d="M4 13V8c0-8 12-8 12 0v5" fill="none" stroke="#d8d8d2" stroke-width="3"/><rect y="12" width="20" height="13" rx="2" fill="#6c6c6c"/></svg></div>
          <div class="th c3">Item</div>
        </div>
        <div class="trow sel"><span class="cb"><svg width="22" height="22"><use href="#check"/></svg></span><span class="cb"></span><svg class="ric" width="24" height="22" viewBox="0 0 24 22"><path d="M1 3h4M8 3h10M1 11h4M8 11h15M1 19h4M8 19h7" stroke="#8fa3b8" stroke-width="4"/></svg><b>&lt;Legend&gt;</b></div>
        <div class="trow"><span class="cb"><svg width="22" height="22"><use href="#check"/></svg></span><span class="cb"></span><svg class="ric" width="24" height="22"><use href="#map" width="24" height="22"/></svg><span>Map 1</span></div>
      </div>
      <div class="hgrip"><svg width="28" height="4" viewBox="0 0 28 4"><path d="M0 2h28" stroke="#8a8a8a" stroke-width="3.500" stroke-dasharray="3.700 1.160"/></svg></div>
      <div class="tabs lower"><div class="tab t3">Layout</div><div class="tab on t4">Item Properties</div><div class="tab t5">Guides</div></div>
      <div class="caption cap2">Item Properties</div>
      <div class="legend-bar">Legend</div>
      <div class="group-head h1"><svg width="17" height="12" viewBox="0 0 17 12"><path d="M1 1h15L8.500 10.500z" fill="none" stroke="#0b0b0b" stroke-width="1.600"/></svg>Main Properties</div>
      <div class="group g1">
        <div class="field f1"><label><u>T</u>itle</label><div class="input short"></div></div>
        <div class="field f2"><label>Map</label><div class="combo"><svg width="24" height="21"><use href="#map" width="24" height="21"/></svg>Map 1</div></div>
        <div class="field f3"><label>Wrap text on</label><div class="input"></div></div>
        <div class="field f4"><label>Arrangement</label><div class="combo"><svg width="24" height="21" viewBox="0 0 24 21"><path d="M1 3h6M1 10.500h6M1 18h6" stroke="#8b8b8b" stroke-width="4"/></svg>Symbols on Left</div></div>
        <div class="checkline"><span class="cb"><svg width="22" height="22"><use href="#check"/></svg></span>Resize to fit contents</div>
      </div>
      <div class="group-head h2"><svg width="17" height="12" viewBox="0 0 17 12"><path d="M1 1h15L8.500 10.500z" fill="none" stroke="#0b0b0b" stroke-width="1.600"/></svg>Legend Items</div>
      <div class="group g2">
        <div class="update"><span class="cb"></span><span>Auto update</span><div class="btn">Update All</div></div>
        <div class="ltree">
          <div class="lrow"><svg width="24" height="26" viewBox="0 0 24 26"><rect x="1" y="1" width="22" height="24" rx="2" fill="#e4e3dd" stroke="#aaa"/><path d="M2 6.500h20" stroke="#999"/><path d="M4 4h5M12 4h8M4 10h5M12 10h8M4 14.500h5M12 14.500h8M4 19h5M12 19h8M4 22.500h5M12 22.500h8" stroke="#777" stroke-width="1.400"/></svg>student_debt_data</div>
          <div class="lrow second-row"><svg class="tri" width="13" height="8" viewBox="0 0 13 8"><path d="M0 0h13L6.500 7.500z" fill="#b5b5b5"/></svg><svg width="26" height="18" viewBox="0 0 26 18"><path d="M1 2c6-3 8 2 12 1 4 0 7-3 11-1 2 4 1 8 1 12-5 2-8-3-12-2-4 0-7 6-11 4C-1 11 1 7 1 2z" fill="#dedede" stroke="#999"/></svg>usa_shapefile</div>
          <div class="srow"><i></i><span>Average Debt under $26,000</span></div>
        </div>
      </div>
    </div>
  </aside>
</main>

<ul class="dropdown">
  <li><svg viewBox="0 0 24 24"><path d="M0 15L5 4l7-2 10-2v17l-10-1z" fill="#d9d9d9" stroke="#999" stroke-width=".7"/><path d="M4 7l18-2M2 12l20-1M10 2L7 16M16 1l-1 15" stroke="#999" stroke-width=".8"/><use href="#plus" x="14.500" y="13.500" width="10" height="10"/></svg>Add 3D Map</li>
  <li><svg viewBox="0 0 24 24"><path d="M1 0h4v1h17v21H3l-2-2z" fill="#dedede" stroke="#999" stroke-width=".7"/><path d="M5 1v18H2" fill="none" stroke="#8a8a8a"/><use href="#plus" x="14.500" y="14" width="10" height="10"/></svg>Add Map</li>
  <li><svg viewBox="0 0 24 24"><rect x="1" y="5" width="21" height="14" fill="url(#sky)" stroke="#888"/><path d="M1.500 12l8-3 12 4v5.500h-20z" fill="#c2a64b"/><use href="#plus" x="14.500" y="14" width="10" height="10"/></svg>Add Picture</li>
  <li class="hot"><svg viewBox="0 0 24 24"><rect x="1" y="4" width="21" height="15" fill="#ededed" stroke="#999"/><text x="7" y="16" class="serif-t">T</text><use href="#plus" x="14.500" y="14" width="10" height="10"/></svg>Add Label</li>
  <li><svg viewBox="0 0 24 24"><path d="M2 2h5v5H2z" fill="#fbb829"/><path d="M2 8.500h5v5H2z" fill="#e5511f"/><path d="M2 15h5v5H2z" fill="#2b9b4c"/><path d="M8 6h7M8 12h11M8 18h5" stroke="#8a8a86" stroke-width="1.800"/><use href="#plus" x="14.500" y="14" width="10" height="10"/></svg>Add Legend</li>
  <li><svg viewBox="0 0 24 24"><path d="M0 10h24" stroke="#555" stroke-width="4"/><path d="M2 10h20" stroke="#aaa" stroke-width="2" stroke-dasharray="4 4"/><use href="#plus" x="14.500" y="14" width="10" height="10"/></svg>Add Scale Bar</li>
  <li><svg viewBox="0 0 24 24"><path d="M11 0l7 20-8-4-7 5z" fill="#4b78ac" stroke="#24476f"/><text x="8" y="14" class="n-t">N</text><use href="#plus" x="14" y="13.500" width="10" height="10"/></svg>Add North Arrow</li>
  <li class="sub"><svg viewBox="0 0 24 24"><rect x="1" y="9" width="13" height="12" fill="#bcdcf6" stroke="#6992b8"/><circle cx="16" cy="12" r="6.500" fill="#f0a09f" stroke="#b55"/><path d="M9 0l7 12H3z" fill="#bfeeb8" stroke="#5da35b"/><use href="#plus" x="14.500" y="14" width="10" height="10"/></svg>Add Shape</li>
  <li><svg viewBox="0 0 24 24"><path d="M11.500 1l3.200 7 7.300.7-5.500 5 1.800 7.300-6.800-3.600L5 21l1.500-7.300L1 8.700 8.500 8z" fill="#fce9a2" stroke="#d8a94f"/><use href="#plus" x="14.500" y="14" width="10" height="10"/></svg>Add Marker</li>
  <li><svg viewBox="0 0 24 24"><path d="M2 20L18 4" stroke="#333" stroke-width="1.400"/><path d="M22 0l-3 7-4-4z" fill="#ddd" stroke="#333" stroke-width=".8"/><path d="M1 18h3v3H1z" fill="#333"/><use href="#plus" x="14.500" y="14" width="10" height="10"/></svg>Add Arrow</li>
  <li class="sub"><svg viewBox="0 0 24 24"><path d="M8 2L2 21 21 9z" fill="none" stroke="#1a1a1a" stroke-width="1.300"/><g fill="#3a7bf0"><circle cx="8" cy="2.500" r="2.700"/><circle cx="2.500" cy="20.500" r="2.700"/><circle cx="21" cy="9" r="2.700"/></g><use href="#plus" x="14.500" y="14.500" width="10" height="10"/></svg>Add Node Item</li>
  <li><svg viewBox="0 0 24 24"><rect x="1" y="1" width="21" height="21" fill="#ececec" stroke="#8ca6c4"/><path d="M3 4h5M3 8h3M3 12h6M3 15h9M3 19h7" stroke="#4e80ba" stroke-width="1.600"/><path d="M11 4.500L7.500 7.500l3.500 3M16.500 4.500l3.500 3-3.500 3M15 3l-2.500 9" fill="none" stroke="#222" stroke-width="1.200"/><use href="#plus" x="14.500" y="14" width="10" height="10"/></svg>Add HTML</li>
  <li><svg viewBox="0 0 24 24"><rect x="1" y="1" width="21" height="21" fill="#f0f0f0" stroke="#7191b6"/><rect x="1.500" y="1.500" width="20" height="5" fill="#a9c8ea"/><path d="M3 4h4M10 4h8" stroke="#55779f" stroke-width="1.300"/><path d="M3 9.500h18M3 13h18M3 16.500h18M3 20h12" stroke="#8e9cab" stroke-width="1.600" stroke-dasharray="5 1.500"/><use href="#plus" x="14" y="13.500" width="10" height="10"/></svg>Add Attribute Table</li>
  <li><svg viewBox="0 0 24 24"><rect x="1" y="1" width="21" height="21" fill="#f0f0f0" stroke="#7191b6"/><rect x="1.500" y="1.500" width="20" height="5" fill="#a9c8ea"/><path d="M3 10h8M3 14h5M3 18h6" stroke="#8e9cab" stroke-width="1.600"/><path d="M17 0l3 2-9 13-3 1 1-4z" fill="#e9a43a" stroke="#5b421c" stroke-width=".8"/><use href="#plus" x="14" y="14" width="10" height="10"/></svg>Add Fixed Table</li>
</ul>
</body>
</html>
```
FILE: styles.css
```css
* { box-sizing: border-box; }
body {
  margin: 0; width: 2028px; height: 1174px; overflow: hidden;
  background: #323232; color: #dedede;
  font: 20px/24px Inter, "Liberation Sans", sans-serif;
  display: flex; flex-direction: column;
}
svg { display: block; flex: none; }
.defs { position: absolute; }
u { text-underline-offset: 4px; }

/* outer window title */
.preview-title {
  height: 24px; flex: none; background: #403635; border-bottom: 1px solid #15100f;
  display: flex; padding-left: 789px; gap: 9px; overflow: hidden;
  color: #b5afae; font-size: 21px; font-weight: 600; letter-spacing: .25px; white-space: nowrap;
}
.preview-title svg { margin-top: -3px; }
.preview-title span { margin-top: -12px; }

/* menu bar */
.menubar {
  height: 38px; flex: none; display: flex; justify-content: space-between; overflow: hidden;
  background: linear-gradient(90deg, #523829, #6f3d27 350px, #85401f 650px, #8b3c20 1000px, #78301f 1320px, #632a25 1560px, #4b2229 1900px, #43202b);
  color: #f0e9e6;
}
.menus { display: flex; align-items: stretch; line-height: 36px; white-space: nowrap; letter-spacing: .15px; }
.m-app { width: 70px; }
.m-layout { width: 98px; }
.m-edit { width: 71px; }
.m-view { width: 80px; }
.m-items { width: 64px; }
.m-add { width: 132px; padding-left: 22px; background: rgba(255, 200, 180, .25); border-radius: 6px; margin-right: 10px; }
.tray { width: 819px; display: flex; align-items: center; }
.tray > * { flex: none; }
.zoom-word { font-size: 26px; font-weight: 600; letter-spacing: -1px; line-height: 30px; margin-top: -5px; width: 91px; }
.t-cc { margin-right: 33px; }
.t-ol { margin-right: 28px; }
.t-cu { margin-right: 27px; }
.t-cloud { margin-right: 28px; }
.t-fly { margin-right: 28px; }
.t-shield { margin-right: 24px; }
.t-bat { margin-right: 30px; }
.t-wifi { margin-right: 31px; }
.t-find { margin-right: 22px; }
.t-cc2 { margin-right: 6px; }
.t-loc { margin-right: 20px; }
.siri {
  width: 23px; height: 23px; border-radius: 50%; margin-right: 25px;
  background: radial-gradient(circle at 50% 50%, #fff 0 12%, transparent 35%), conic-gradient(#3fa17c, #3b7fb0, #3359b5, #7a4aa8, #c93a78, #40606f, #3fa17c);
}
.clock { white-space: nowrap; margin-top: -2px; }

.window-title {
  height: 47px; flex: none; background: #403935; border-top: 1px solid #0e1a1c; border-bottom: 1px solid #0b0b0b;
  box-shadow: inset 0 2px #6f6a67; padding-left: 835px; line-height: 44px;
  font-size: 21px; letter-spacing: .25px; font-weight: 600; color: #c0b9b5;
}

/* tool bars */
.toolbar {
  height: 61px; flex: none; display: flex; align-items: center; background: #343434;
  padding-bottom: 1px;
}
.toolbar > * { flex: none; }
.toolbar.second { height: 62px; border-top: 2px solid #6a6a6a; border-bottom: 3px solid #707070; padding-bottom: 0; }
.i-man { margin-left: 15px; }
.i-open { margin-left: 16px; }
.i-save { margin-left: 19px; }
.sep { width: 1px; height: 30px; background: #2a2a2a; }
.s1 { margin-left: 13px; }
.i-page { margin-left: 16px; }
.s2 { margin-left: 13px; }
.i-print { margin-left: 14px; }
.i-exp { margin-left: 18px; }
.i-first { margin-left: 305px; }
.i-prev { margin-left: 25px; }
.spin {
  width: 134px; height: 47px; margin-left: 15px; display: flex; border: 2px solid #262626; border-radius: 4px;
  background: #1d1d1d; color: #555; align-items: center; justify-content: space-between; padding-left: 4px;
}
.spin i { width: 31px; height: 43px; background: #3f3f3f; border: 1px solid #555; display: flex; align-items: center; justify-content: center; }
.spin i::after { content: ""; border: 6px solid transparent; border-top: 7px solid #252525; border-bottom: 0; }
.i-next { margin-left: 14px; }
.i-last { margin-left: 24px; }
.i-print2 { margin-left: 21px; }
.i-exp2 { margin-left: 19px; }
.dim { filter: grayscale(.75); opacity: .35; }
.caret { margin-left: 9px; border: 6px solid transparent; border-top: 8px solid #b9b9b9; border-bottom: 0; }
.i-atlas { margin-left: 10px; }
.one { font: bold 18px "Liberation Sans", sans-serif; fill: #111; letter-spacing: -1px; }
.j-full { margin-left: 16px; }
.j-ref { margin-left: 15px; }
.j-grip { margin-left: 22px; }
.j-lock { margin-left: 13px; }
.j-unlock { margin-left: 17px; }
.j-grp { margin-left: 17px; }
.j-ugrp { margin-left: 20px; }

/* work area */
.work { flex: 1; display: flex; min-height: 0; }
.stage { width: 1514px; flex: none; background: #d9d9d9; }
.nums text { font: 13.5px Inter, sans-serif; fill: #bdbdbd; transform: translateY(14px); }
.states path { stroke: #3a3438; stroke-width: 2.6; stroke-linejoin: round; }
.states .r { fill: #ed4e5c; }
.states .p { fill: #f5b2c4; }
.states .v { fill: #913df6; }
.states .w { fill: #fff; stroke: none; }
.states .s, .states .d { fill: none; stroke-width: 2.6; }
.states .d { stroke: #33272b; stroke-width: 3.2; }
.legend text { font: 19px "Liberation Serif", serif; fill: #5e5e5e; }
.handles { fill: #fff; stroke: #7fa9dc; }

.dock { flex: 1; display: flex; border-left: 2px solid #111; overflow: hidden; }
.gripcol { width: 7px; flex: none; padding: 478px 0 0 1px; border-right: 1px solid #282828; }
.panels { flex: 1; min-width: 0; display: flex; flex-direction: column; white-space: nowrap; }
.panels > * { flex: none; }
.tabs { height: 44px; padding: 2px 0 0 1px; display: flex; align-items: flex-start; gap: 2px; background: linear-gradient(#0000 42px, #252525 42px 43px, #3d3d3d 43px); }
.tab {
  height: 37px; margin-top: 3px; border: 2px solid #484848; border-bottom: 0; border-radius: 4px 4px 0 0;
  text-align: center; line-height: 38px; background: #303030; box-shadow: 0 0 0 1px #242424; clip-path: inset(-1px -1px 0 -1px);
}
.tab.on { height: 43px; margin-top: 0; background: #333; line-height: 41px; }
.t1 { width: 91px; }
.t2 { width: 161px; }
.t3 { width: 102px; }
.t4 { width: 187px; }
.t5 { width: 104px; }
.caption { font-size: 17.5px; padding-left: 6.500px; letter-spacing: .1px; }
.cap1 { height: 33px; line-height: 35px; }
.tree { height: 227px; background: #1e1e1e; border-left: 2px solid #2a2a2a; }
.thead { height: 32px; display: flex; background: linear-gradient(#424242, #383838); border-top: 1px solid #555; border-bottom: 1px solid #222; color: #eee; }
.th { border-right: 2px solid #555; line-height: 33px; }
.c1 { width: 43px; padding: 6px 0 0 4px; }
.c2 { width: 45px; padding: 4px 0 0 8px; }
.c3 { flex: 1; padding-left: 5px; border: 0; }
.trow { height: 30px; line-height: 22px; display: flex; align-items: center; padding: 0 0 1px 5px; color: #f2f2f2; }
.trow b { letter-spacing: .2px; margin-top: -1px; }
.trow > span:last-child { margin-top: -2px; }
.trow.sel { background: #474747; }
.cb { width: 22px; height: 22px; background: #1d1d1d; border: 1px solid #272727; flex: none; display: block; }
.cb svg { margin: -1px; }
.trow .cb { margin-right: 23px; }
.trow .ric { margin: 0 10px 0 0; }
.hgrip { height: 12px; padding: 4px 0 0 301px; }
.lower { height: 44px; }
.lower .tab { line-height: 37px; }
.lower .tab.on { line-height: 39px; }
.cap2 { height: 31px; line-height: 34px; letter-spacing: .2px; }
.legend-bar { height: 32px; background: #c8c8c8; color: #fff; font-weight: 700; letter-spacing: .35px; padding-left: 8px; line-height: 33px; border-bottom: 1px solid #777; }
.group-head { font-weight: 700; color: #fff; display: flex; align-items: center; gap: 14px; padding-left: 24px; font-size: 20.5px; letter-spacing: .35px; }
.h1 { height: 51px; padding-top: 16px; }
.h2 { height: 44px; padding-top: 9px; }
.group { margin-left: 22px; border: 1px solid #404040; border-right: 0; border-radius: 4px 0 0 0; padding-left: 19px; }
.g1 { height: 272px; padding-top: 21px; }
.field { display: flex; align-items: center; color: #ececec; height: 38px; }
.field label { width: 138px; flex: none; font-size: 20px; letter-spacing: .25px; }
.input { flex: 1; height: 38px; background: #1d1d1d; border: 1px solid #292929; border-radius: 3px; }
.input.short { flex: none; width: 322px; }
.combo { flex: 1; height: 36px; border: 1px solid #575757; border-right: 0; background: linear-gradient(#474747, #3b3b3b); box-shadow: 0 0 0 1px #222; border-radius: 3px 0 0 3px; color: #0c0c0c; display: flex; align-items: center; gap: 6px; padding-left: 9px; letter-spacing: .2px; }
.f2 { margin-top: 12px; }
.f3 { margin-top: 10px; }
.f4 { margin-top: 10px; }
.checkline { display: flex; align-items: center; gap: 8px; margin-top: 16px; height: 24px; letter-spacing: .35px; color: #cfcfcf; }
.g2 { height: 160px; padding-top: 22px; }
.update { height: 28px; display: flex; align-items: center; gap: 8px; margin-top: 1px; color: #cfcfcf; letter-spacing: .3px; }
.btn { margin-left: auto; width: 45px; height: 28px; overflow: hidden; font-size: 16.500px; line-height: 27px; padding-left: 9px; border: 1px solid #606060; border-right: 0; border-radius: 4px 0 0 4px; background: #404040; }
.ltree { height: 100px; margin: 14px 0 0 1px; background: #1d1d1d; border: 1px solid #2b2b2b; padding-left: 37px; color: #f0f0f0; letter-spacing: .45px; }
.lrow { height: 29px; display: flex; align-items: center; gap: 11px; }
.lrow:first-child { letter-spacing: .6px; }
.second-row { margin-left: -28px; gap: 10px; }
.tri { margin-right: 4px; }
.srow { display: flex; height: 56px; margin-left: 31px; gap: 10px; }
.srow i { width: 55px; background: #f5b2c4; border: 1px solid #8a6a72; }
.srow span { line-height: 54px; }

/* open menu */
.dropdown {
  position: absolute; left: 382px; top: 63px; width: 317px; height: 510px; margin: 0; padding: 10px 7px 10px 6px; list-style: none;
  border: 1.500px solid #716a68; border-radius: 9px; box-shadow: 0 0 0 1px #1c1817, 0 8px 30px rgba(0, 0, 0, .35);
  background:
    radial-gradient(ellipse 150px 190px at 104% 97%, rgba(126, 28, 128, .95), rgba(126, 40, 130, .7) 40%, rgba(126, 60, 130, .25) 75%, transparent),
    linear-gradient(#3c312e, #3b332f 24%, #45403c 31%, #625d59 41%, #7b7470 52%, #807975 63%, #80696b 72%, #80525a 82%, #7f3f48 91%, #79363c);
  color: #ece8e7; letter-spacing: .2px;
}
.dropdown li { height: 35.200px; line-height: 31px; display: flex; padding-left: 16px; gap: 10px; white-space: nowrap; }
.dropdown li svg { width: 25px; height: 25px; margin-top: 4px; }
.hot { position: relative; background: #2f62cb; background-clip: content-box; color: #fff; }
.dropdown .hot { background: linear-gradient(#2f62cb, #2f62cb); border-radius: 6px; }
.hot::after { content: ""; position: absolute; left: 0; right: 0; top: 1px; bottom: 2px; border: 3px solid #ee3f25; }
.sub::after { content: ""; width: 9px; height: 9px; border: solid #eee; border-width: 3px 3px 0 0; transform: rotate(45deg); margin: 10px 19px 0 auto; }
.serif-t { font: 13px "Liberation Serif", serif; fill: #222; }
.n-t { font: bold 9px "Liberation Sans", sans-serif; fill: #fff; }
```
